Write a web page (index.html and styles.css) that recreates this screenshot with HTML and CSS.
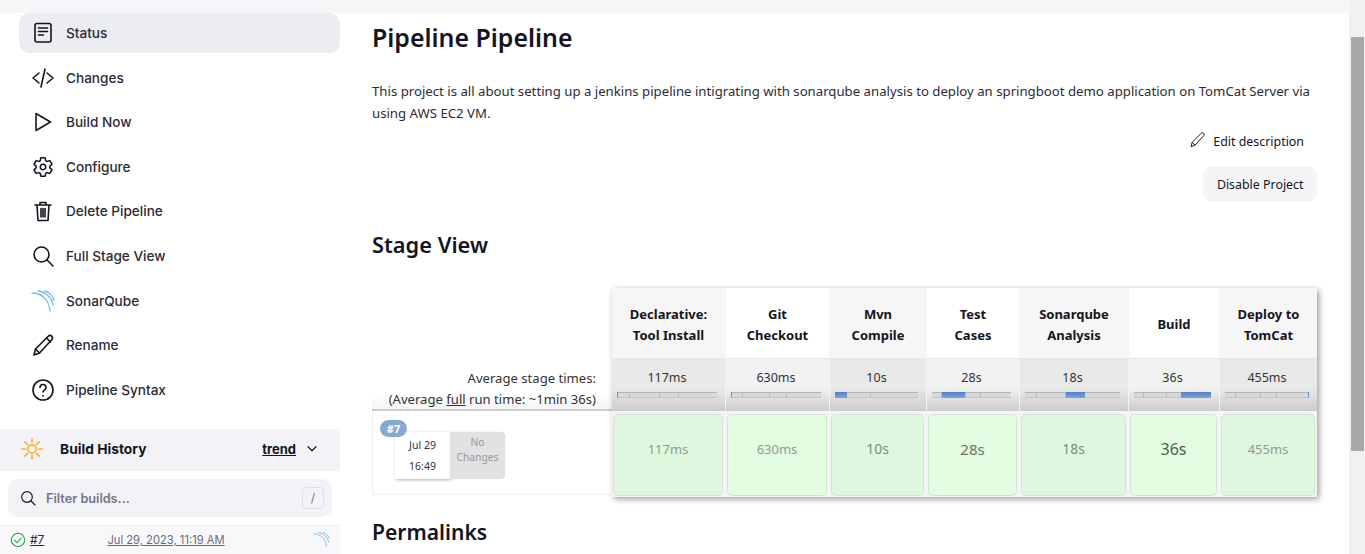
FILE: index.html
```html
<!DOCTYPE html>
<html lang="en">
<head>
	<title>Pipeline Pipeline</title>
	<link rel="stylesheet" href="styles.css">
</head>
<body>
<div class="top-strip"></div>
<div class="page">
	<aside class="sidebar">
		<nav class="tasks">
			<a class="task task-active">
				<svg class="icon" viewBox="0 0 24 24"><rect x="4" y="2.500" width="16" height="18.500" rx="2"/><path d="M7.500 7h9M7.500 10.500h9M7.500 14h5"/></svg>
				<span>Status</span>
			</a>
			<a class="task">
				<svg class="icon" viewBox="0 0 24 24"><path d="M8 7l-6 5 6 5M16 7l6 5-6 5M14 3l-4 18"/></svg>
				<span>Changes</span>
			</a>
			<a class="task">
				<svg class="icon" viewBox="0 0 24 24"><path d="M5 3.500L19.500 12 5 20.500z"/></svg>
				<span>Build Now</span>
			</a>
			<a class="task">
				<svg class="icon icon-gear" viewBox="-24 -24 560 560"><path d="M262.290 192.310a64 64 0 1057.400 57.400 64.130 64.130 0 00-57.400-57.400zM416.390 256a154.340 154.340 0 01-1.530 20.790l45.210 35.460a10.810 10.810 0 012.450 13.750l-42.770 74a10.810 10.810 0 01-13.140 4.590l-44.900-18.080a16.110 16.110 0 00-15.170 1.750A164.480 164.480 0 01325 400.800a15.940 15.940 0 00-8.820 12.140l-6.730 47.890a11.080 11.080 0 01-10.680 9.170h-85.540a11.110 11.110 0 01-10.690-8.870l-6.720-47.820a16.070 16.070 0 00-9-12.220 155.300 155.300 0 01-21.460-12.570 16 16 0 00-15.110-1.710l-44.890 18.070a10.810 10.810 0 01-13.140-4.580l-42.770-74a10.800 10.800 0 012.450-13.750l38.210-30a16.050 16.050 0 006-14.080c-.36-4.170-.58-8.330-.58-12.500s.21-8.270.58-12.350a16 16 0 00-6.070-13.940l-38.190-30A10.810 10.810 0 0149.480 186l42.770-74a10.810 10.810 0 0113.140-4.590l44.900 18.080a16.110 16.110 0 0015.170-1.750A164.480 164.480 0 01187 111.200a15.940 15.940 0 008.820-12.140l6.730-47.890A11.080 11.080 0 01213.230 42h85.540a11.110 11.110 0 0110.690 8.870l6.720 47.820a16.070 16.070 0 009 12.220 155.300 155.300 0 0121.460 12.570 16 16 0 0015.110 1.710l44.890-18.070a10.810 10.810 0 0113.140 4.580l42.770 74a10.800 10.800 0 01-2.450 13.750l-38.210 30a16.050 16.050 0 00-6.050 14.080c.33 4.140.55 8.300.55 12.470z"/></svg>
				<span>Configure</span>
			</a>
			<a class="task">
				<svg class="icon" viewBox="0 0 24 24"><path d="M4 6h16M9 6V3.500h6V6M6 6l1 15.500h10L18 6M10 9.500V18M12 9.500V18M14 9.500V18"/></svg>
				<span>Delete Pipeline</span>
			</a>
			<a class="task">
				<svg class="icon" viewBox="0 0 24 24"><circle cx="10.500" cy="10.500" r="7.500"/><path d="M16 16l6 6"/></svg>
				<span>Full Stage View</span>
			</a>
			<a class="task">
				<svg class="icon icon-sonar" viewBox="0 0 24 24"><path d="M1 4c10 0 17 7 18 18"/><path d="M7 2c8 1 14 7 15 14"/><path d="M14 2c4 1 8 5 9 9"/></svg>
				<span>SonarQube</span>
			</a>
			<a class="task">
				<svg class="icon" viewBox="0 0 24 24"><path d="M3 22l1.500-6L17 3.500c1.500-1.500 3-1.500 4 0s.5 2.500-.5 3.500L8.500 20z"/><path d="M4.500 16l4 4M15.500 5l4 4"/></svg>
				<span>Rename</span>
			</a>
			<a class="task">
				<svg class="icon" viewBox="0 0 24 24"><circle cx="12" cy="12" r="10"/><path d="M9 9.500c0-4 6-4 6 0 0 2.500-3 2.500-3 4.500"/><path d="M12 17.500v.5"/></svg>
				<span>Pipeline Syntax</span>
			</a>
		</nav>

		<div class="history-head">
			<svg class="sun" viewBox="0 0 24 24"><circle cx="12" cy="12" r="4.500"/><path d="M12 1v4M12 19v4M1 12h4M19 12h4M4.200 4.200l2.800 2.800M17 17l2.800 2.800M4.200 19.800L7 17M17 7l2.800-2.800"/></svg>
			<span class="history-title">Build History</span>
			<a class="trend">trend</a>
			<svg class="chevron" viewBox="0 0 24 24"><path d="M5 8l7 7 7-7"/></svg>
		</div>
		<div class="filter">
			<svg class="filter-icon" viewBox="0 0 24 24"><circle cx="10.500" cy="10.500" r="8"/><path d="M16.500 16.500l6 6"/></svg>
			<span class="filter-text">Filter builds...</span>
			<span class="kbd">/</span>
		</div>
		<div class="build-row">
			<svg class="ok" viewBox="0 0 24 24"><circle cx="12" cy="12" r="10"/><path d="M7 12.500l3.500 3.500L17 9"/></svg>
			<a class="build-num">#7</a>
			<a class="build-date">Jul 29, 2023, 11:19 AM</a>
			<svg class="icon-sonar build-sonar" viewBox="0 0 24 24"><path d="M1 4c10 0 17 7 18 18"/><path d="M7 2c8 1 14 7 15 14"/><path d="M14 2c4 1 8 5 9 9"/></svg>
		</div>
	</aside>

	<main class="main">
		<h1>Pipeline Pipeline</h1>
		<p class="desc">This project is all about setting up a jenkins pipeline intigrating with sonarqube analysis to deploy an springboot demo application on TomCat Server via using AWS EC2 VM.</p>
		<div class="actions">
			<a class="edit-link">
				<svg class="edit-icon" viewBox="0 0 24 24"><path d="M3 22l1.500-6L17 3.500c1.500-1.500 3-1.500 4 0s.5 2.500-.5 3.500L8.500 20z"/><path d="M4.500 16l4 4"/></svg>
				<span>Edit description</span>
			</a>
			<a class="btn-disable">Disable Project</a>
		</div>

		<h2 class="stage-title">Stage View</h2>
		<div class="stage">
			<div class="stage-left">
				<div class="avg">Average stage times:<br>(Average <u>full</u> run time: ~1min 36s)</div>
				<div class="build-cell">
					<span class="badge">#7</span>
					<div class="date-box">
						<span>Jul 29</span>
						<span>16:49</span>
					</div>
					<div class="no-changes">No<br>Changes</div>
				</div>
			</div>
			<div class="stage-table">
				<div class="col col-odd c1">
					<div class="head">Declarative:<br>Tool Install</div>
					<div class="time">117ms<div class="bar"><i class="fill f1"></i></div></div>
					<div class="result"><div class="box t-faint">117ms</div></div>
				</div>
				<div class="col c2">
					<div class="head">Git<br>Checkout</div>
					<div class="time">630ms<div class="bar"><i class="fill f2"></i></div></div>
					<div class="result"><div class="box t-faint">630ms</div></div>
				</div>
				<div class="col col-odd c3">
					<div class="head">Mvn<br>Compile</div>
					<div class="time">10s<div class="bar"><i class="fill f3"></i></div></div>
					<div class="result"><div class="box t-mid">10s</div></div>
				</div>
				<div class="col c4">
					<div class="head">Test<br>Cases</div>
					<div class="time">28s<div class="bar"><i class="fill f4"></i></div></div>
					<div class="result"><div class="box t-dark">28s</div></div>
				</div>
				<div class="col col-odd c5">
					<div class="head">Sonarqube<br>Analysis</div>
					<div class="time">18s<div class="bar"><i class="fill f5"></i></div></div>
					<div class="result"><div class="box t-mid">18s</div></div>
				</div>
				<div class="col c6">
					<div class="head">Build</div>
					<div class="time">36s<div class="bar"><i class="fill f6"></i></div></div>
					<div class="result"><div class="box t-darkest">36s</div></div>
				</div>
				<div class="col col-odd c7">
					<div class="head">Deploy to<br>TomCat</div>
					<div class="time">455ms<div class="bar"><i class="fill f7"></i></div></div>
					<div class="result"><div class="box t-faint">455ms</div></div>
				</div>
			</div>
		</div>

		<h2 class="perma-title">Permalinks</h2>
	</main>

	<div class="scrollbar"><div class="thumb"></div></div>
</div>
</body>
</html>
```

FILE: styles.css
```css
html, body {
    margin: 0;
    height: 554px;
    overflow: hidden;
    background: #fff;
}

body {
    font-family: 'Noto Sans', 'Open Sans', sans-serif;
    font-size: 13px;
    color: #14141f;
}

.top-strip {
    height: 13px;
    background: #f6f6f8;
    margin-right: 16px;
}

.page {
    display: flex;
    height: 541px;
}

.sidebar {
    width: 340px;
    flex: none;
    font-family: 'Inter', sans-serif;
}

.tasks {
    display: flex;
    flex-direction: column;
    gap: 4.6px;
    padding-left: 19px;
}

.task {
    display: flex;
    align-items: center;
    height: 40px;
    padding-left: 12px;
    gap: 11px;
    color: #2b2b38;
    font-size: 13.6px;
    font-weight: 500;
    border-radius: 10px;
}

.task-active {
    background: #ecedf3;
}

.icon {
    width: 24px;
    height: 24px;
    flex: none;
    fill: none;
    stroke: #14141f;
    stroke-width: 1.6;
    stroke-linecap: round;
    stroke-linejoin: round;
}

.icon-gear {
    stroke-width: 36;
}

.icon-sonar {
    fill: none;
    stroke: #7fbce8;
    stroke-width: 1.4;
}

.history-head {
    display: flex;
    align-items: center;
    height: 42px;
    margin-top: 19px;
    padding: 0 0 2px 21px;
    box-sizing: border-box;
    background: #f3f3f7;
}

.sun {
    width: 22px;
    height: 22px;
    fill: none;
    stroke: #fbb32c;
    stroke-width: 1.8;
    stroke-linecap: round;
}

.history-title {
    margin-left: 17px;
    font-weight: 700;
    font-size: 13.8px;
}

.trend {
    margin-left: auto;
    font-weight: 700;
    font-size: 13px;
    text-decoration: underline;
}

.chevron {
    width: 14px;
    height: 14px;
    margin: 0 21px 0 9px;
    fill: none;
    stroke: #14141f;
    stroke-width: 2.2;
    stroke-linecap: round;
    stroke-linejoin: round;
}

.filter {
    display: flex;
    align-items: center;
    height: 38px;
    margin: 8px 8px 0;
    padding: 0 8px 0 12px;
    border-radius: 10px;
    background: #f3f3f7;
}

.filter-icon {
    width: 16px;
    height: 16px;
    fill: none;
    stroke: #14141f;
    stroke-width: 1.7;
    stroke-linecap: round;
}

.filter-text {
    margin: 1px 0 0 10px;
    color: #74748c;
    font-weight: 600;
    font-size: 12.7px;
}

.kbd {
    margin-left: auto;
    width: 20px;
    height: 20px;
    line-height: 20px;
    text-align: center;
    border: 1px solid #dfdfe8;
    border-radius: 4px;
    color: #74748c;
    font-size: 12px;
}

.build-row {
    display: flex;
    align-items: center;
    height: 29px;
    margin-top: 8px;
    padding: 0 10px;
    background: #f8f8fa;
    border-top: 1px solid #eeeef2;
    box-sizing: border-box;
    font-size: 12px;
}

.ok {
    width: 16px;
    height: 16px;
    flex: none;
    fill: none;
    stroke: #1ea64b;
    stroke-width: 1.6;
    stroke-linecap: round;
    stroke-linejoin: round;
}

.build-num {
    margin-left: 4px;
    text-decoration: underline;
    color: #2b2b38;
}

.build-date {
    margin-left: 63px;
    font-size: 11.2px;
    text-decoration: underline;
    color: #6b6b78;
}

.build-sonar {
    width: 17px;
    height: 17px;
    margin-left: auto;
}

.main {
    flex: 1;
    min-width: 0;
    padding-left: 32px;
    padding-right: 32px;
}

h1 {
    margin: 8px 0 0;
    font-size: 24.9px;
    line-height: 32px;
    font-weight: 600;
}

.desc {
    margin: 27px 0 0;
    font-size: 13.2px;
    line-height: 22px;
    color: #2b2b38;
}

.actions {
    display: flex;
    flex-direction: column;
    align-items: flex-end;
}

.edit-link {
    display: flex;
    align-items: center;
    gap: 7px;
    margin-top: 5px;
    margin-right: 13px;
    height: 24px;
    font-size: 12.4px;
}

.edit-icon {
    width: 17px;
    height: 17px;
    margin-bottom: 4px;
    fill: none;
    stroke: #14141f;
    stroke-width: 1.4;
    stroke-linejoin: round;
}

.btn-disable {
    margin-top: 13px;
    height: 36px;
    line-height: 37px;
    padding: 0 13.5px;
    border-radius: 10px;
    background: #f5f5f8;
    font-size: 12.4px;
}

.stage-title {
    margin: 28px 0 0;
    font-size: 21.8px;
    line-height: 30px;
    font-weight: 600;
}

.stage {
    display: flex;
    margin-top: 28px;
    align-items: flex-start;
}

.stage-left {
    width: 240px;
    flex: none;
    padding-top: 72px;
}

.avg {
    height: 51px;
    padding: 8px 16px 0 0;
    box-sizing: border-box;
    text-align: right;
    line-height: 21px;
    font-size: 13.1px;
    color: #333;
    background: linear-gradient(to bottom, #fff 70%, #f4f4f4);
    border-bottom: 2px solid #ccc;
}

.build-cell {
    position: relative;
    display: flex;
    height: 84px;
    padding: 21px 0 0 22px;
    box-sizing: border-box;
    border: 1px solid #eee;
    border-top: 0;
}

.badge {
    position: absolute;
    left: 7px;
    top: 9px;
    width: 27px;
    height: 17px;
    line-height: 17px;
    text-align: center;
    border-radius: 9px;
    background: #85a9cf;
    color: #fff;
    font-size: 11px;
    font-weight: 700;
}

.date-box {
    display: flex;
    flex-direction: column;
    align-items: center;
    justify-content: space-evenly;
    width: 55px;
    height: 47px;
    background: #fff;
    box-shadow: 1px 1px 3px rgba(0, 0, 0, .3);
    font-size: 10.5px;
    color: #333;
}

.no-changes {
    width: 55px;
    height: 47px;
    padding-top: 3px;
    box-sizing: border-box;
    text-align: center;
    line-height: 15px;
    font-size: 10.3px;
    color: #999;
    background: #e2e2e2;
    border-radius: 0 5px 5px 0;
    box-shadow: 0 0 1px rgba(0, 0, 0, .3);
}

.stage-table {
    display: flex;
    gap: 1px;
    background: #f4f4f4;
    box-shadow: 2px 2px 6px rgba(0, 0, 0, .4);
}

.col {
    background: #fff;
}

.c1 { width: 113px; }
.c2 { width: 103px; }
.c3 { width: 96px; }
.c4 { width: 92px; }
.c5 { width: 108px; }
.c6 { width: 90px; }
.c7 { width: 97px; }

.head {
    display: flex;
    align-items: center;
    justify-content: center;
    height: 71px;
    padding-top: 3px;
    text-align: center;
    font-weight: 700;
    font-size: 13px;
    line-height: 21px;
    background: #fff;
    border-bottom: 1px solid #e6e6e6;
    box-sizing: border-box;
}

.col-odd .head {
    background: #f6f6f6;
}

.time {
    height: 52px;
    padding: 10px 8px 0 5px;
    box-sizing: border-box;
    text-align: center;
    font-size: 12.5px;
    line-height: 18px;
    color: #333;
    background: linear-gradient(to bottom, #f2f2f2 55%, #ccc);
}

.col-odd .time {
    background: linear-gradient(to bottom, #e9e9e9 55%, #ccc);
}

.bar {
    position: relative;
    height: 6px;
    margin-top: 5px;
    box-sizing: border-box;
    border-top: 1px solid #b4b4b4;
    border-bottom: 1px solid #c4c4c4;
    background:
        linear-gradient(to right, transparent 12%, #b8b8b8 12%, #b8b8b8 12.8%, transparent 12.8%, transparent 42%, #b8b8b8 42%, #b8b8b8 42.8%, transparent 42.8%, transparent 61%, #b8b8b8 61%, #b8b8b8 61.8%, transparent 61.8%),
        #d8d8d8;
}

.fill {
    position: absolute;
    top: -1px;
    height: 6px;
    background: linear-gradient(to bottom, #4f81c7, #7ba4dd);
}

.f1 { left: 0; width: 1px; }
.f2 { left: 0; width: 1px; }
.f3 { left: 0; width: 12px; }
.f4 { left: 10px; width: 23px; }
.f5 { left: 41px; width: 19px; }
.f6 { right: 0; width: 30px; }
.f7 { right: 0; width: 1px; }

.result {
    height: 86px;
    padding: 3px 2px 0 1px;
    box-sizing: border-box;
    background: #f4f4f4;
}

.box {
    height: 82px;
    line-height: 68px;
    text-align: center;
    background: #e3fde3;
    border: 1px solid #d0e6d0;
    border-radius: 5px;
    box-sizing: border-box;
}

.col-odd .box {
    background: #dff7df;
}

.t-faint { font-size: 13px; color: #8f9a8f; }
.t-mid { font-size: 14px; color: #7f8a7f; }
.t-dark { font-size: 15px; color: #6a726a; }
.t-darkest { font-size: 16px; color: #555c55; }

.perma-title {
    margin: 20px 0 0;
    font-size: 21.1px;
    line-height: 30px;
    font-weight: 600;
}

.scrollbar {
    width: 16px;
    flex: none;
    margin-top: -13px;
    height: 554px;
    background: #f1f1f1;
    padding-top: 37px;
    box-sizing: border-box;
}

.thumb {
    height: 414px;
    margin: 0 1px 0 2px;
    background: #a8a8a8;
}
```
